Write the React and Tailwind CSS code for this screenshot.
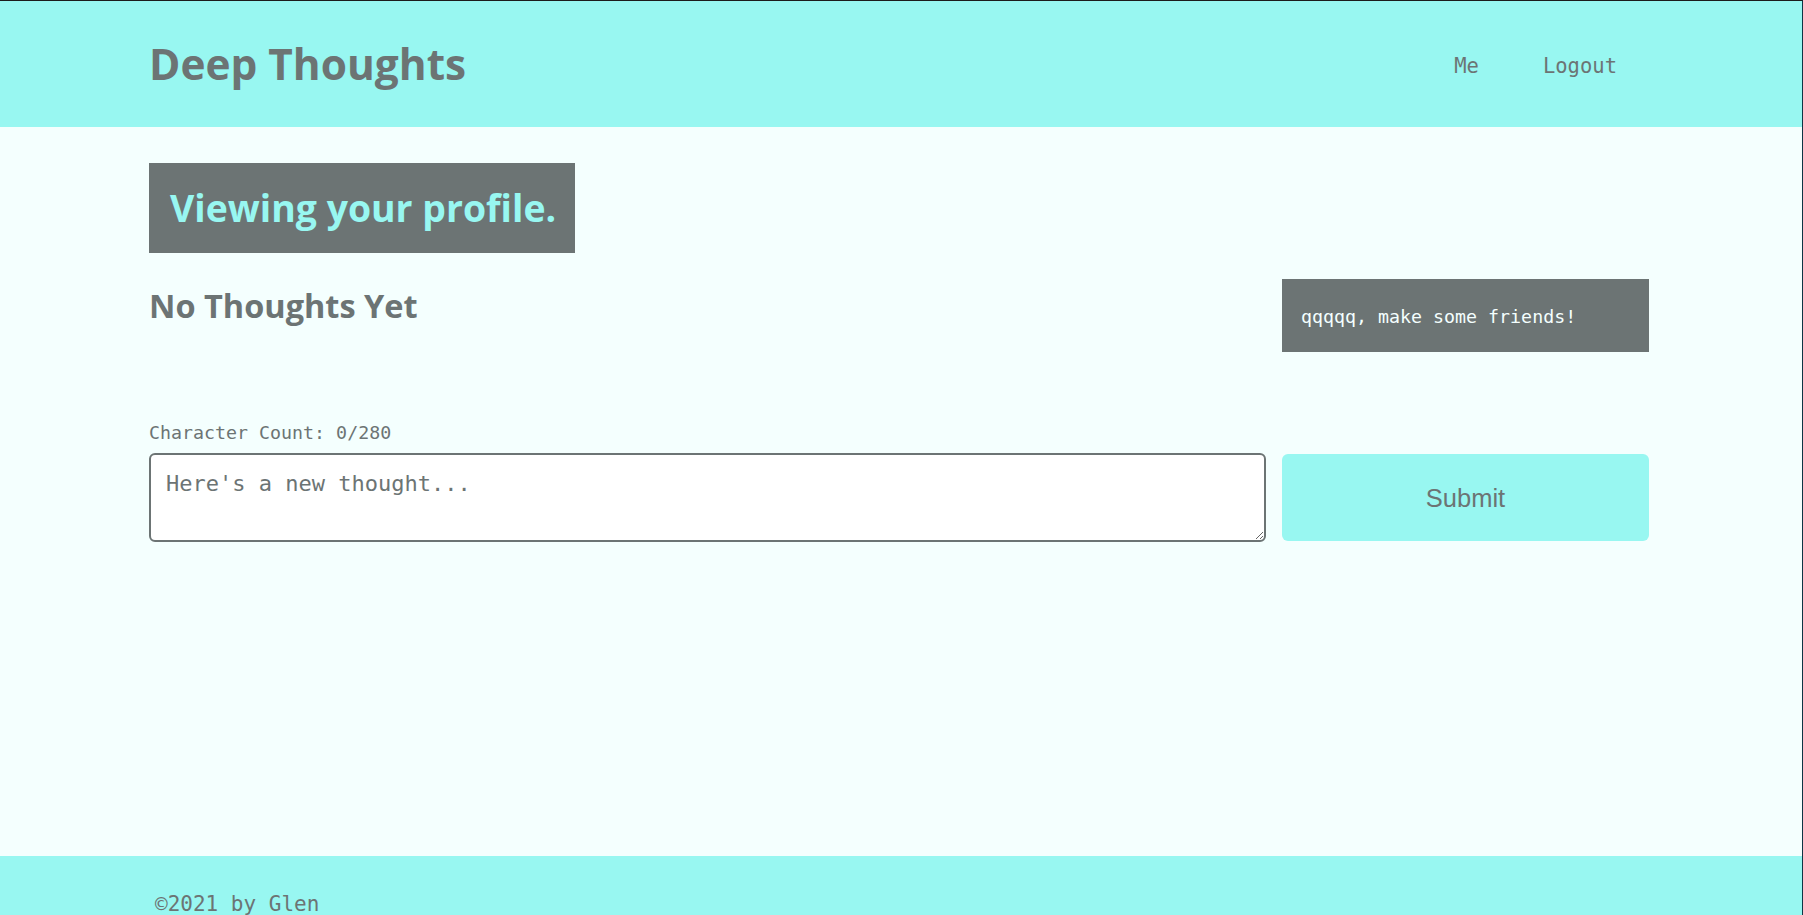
import React, { useState } from 'react';

const SANS = "font-['Open_Sans','Noto_Sans',sans-serif]";
const MONO = "font-['DejaVu_Sans_Mono','Liberation_Mono',monospace]";

function Header() {
  return (
    <header className="bg-[#98f7f1] h-[126px]">
      <div className="ml-[149px] w-[1500px] h-full flex items-center justify-between">
        <h1 className={`${SANS} font-bold text-[42.4px] leading-none text-[#6c7474] pt-[1px]`}>
          Deep Thoughts
        </h1>
        <nav className={`${MONO} flex text-[20.5px] leading-none text-[#6c7474] pt-[4px]`}>
          <a href="#" className="px-8">Me</a>
          <a href="#" className="px-8">Logout</a>
        </nav>
      </div>
    </header>
  );
}

export default function App() {
  const [text, setText] = useState('');

  return (
    <div className="min-h-screen bg-[#f4fffe] border-t border-r border-t-[#1c1c1c] border-r-[#0e3545]">
      <Header />

      <main className="min-h-[729px] ml-[149px] w-[1500px] pt-[36px]">
        {/* profile banner */}
        <div className="w-[426px] h-[90px] bg-[#6c7474] flex items-center pl-[21px]">
          <h2 className={`${SANS} font-bold text-[37.4px] leading-none text-[#98f7f1] whitespace-nowrap`}>
            Viewing your profile.
          </h2>
        </div>

        {/* thoughts + friends */}
        <div className="flex gap-4 mt-[26px]">
          <div className="flex-1">
            <h3 className={`${SANS} font-bold text-[32.5px] leading-none text-[#6c7474] mt-[11px]`}>
              No Thoughts Yet
            </h3>
          </div>
          <div className="w-[367px] h-[73px] bg-[#6c7474] flex items-center px-[19px]">
            <p className={`${MONO} text-[18.3px] leading-none text-[#f4fffe] pt-[3px]`}>
              qqqqq, make some friends!
            </p>
          </div>
        </div>

        {/* thought form */}
        <div className="mt-[72px]">
          <p className={`${MONO} text-[18.3px] leading-none text-[#6c7474]`}>
            Character Count: {text.length}/280
          </p>
          <form className="flex gap-4 mt-[11px]" onSubmit={e => e.preventDefault()}>
            <textarea
              value={text}
              onChange={e => setText(e.target.value.slice(0, 280))}
              placeholder="Here's a new thought..."
              className={`${MONO} flex-1 h-[89px] bg-white border-2 border-[#6c7474] rounded-[6px] pl-[15px] pt-[18px] text-[22px] leading-[22px] text-[#6c7474] placeholder:text-[#6c7474] outline-none`}
            />
            <button
              type="submit"
              className="w-[367px] h-[87px] mt-[1px] bg-[#98f7f1] rounded-[6px] font-['Liberation_Sans',Arial,sans-serif] text-[25.5px] text-[#6c7474]"
            >
              Submit
            </button>
          </form>
        </div>
      </main>

      <footer className="bg-[#98f7f1] pt-[38px] pb-[38px]">
        <div className="ml-[155px]">
          <p className={`${MONO} text-[21px] leading-none text-[#6c7474]`}>©2021 by Glen</p>
        </div>
      </footer>
    </div>
  );
}
